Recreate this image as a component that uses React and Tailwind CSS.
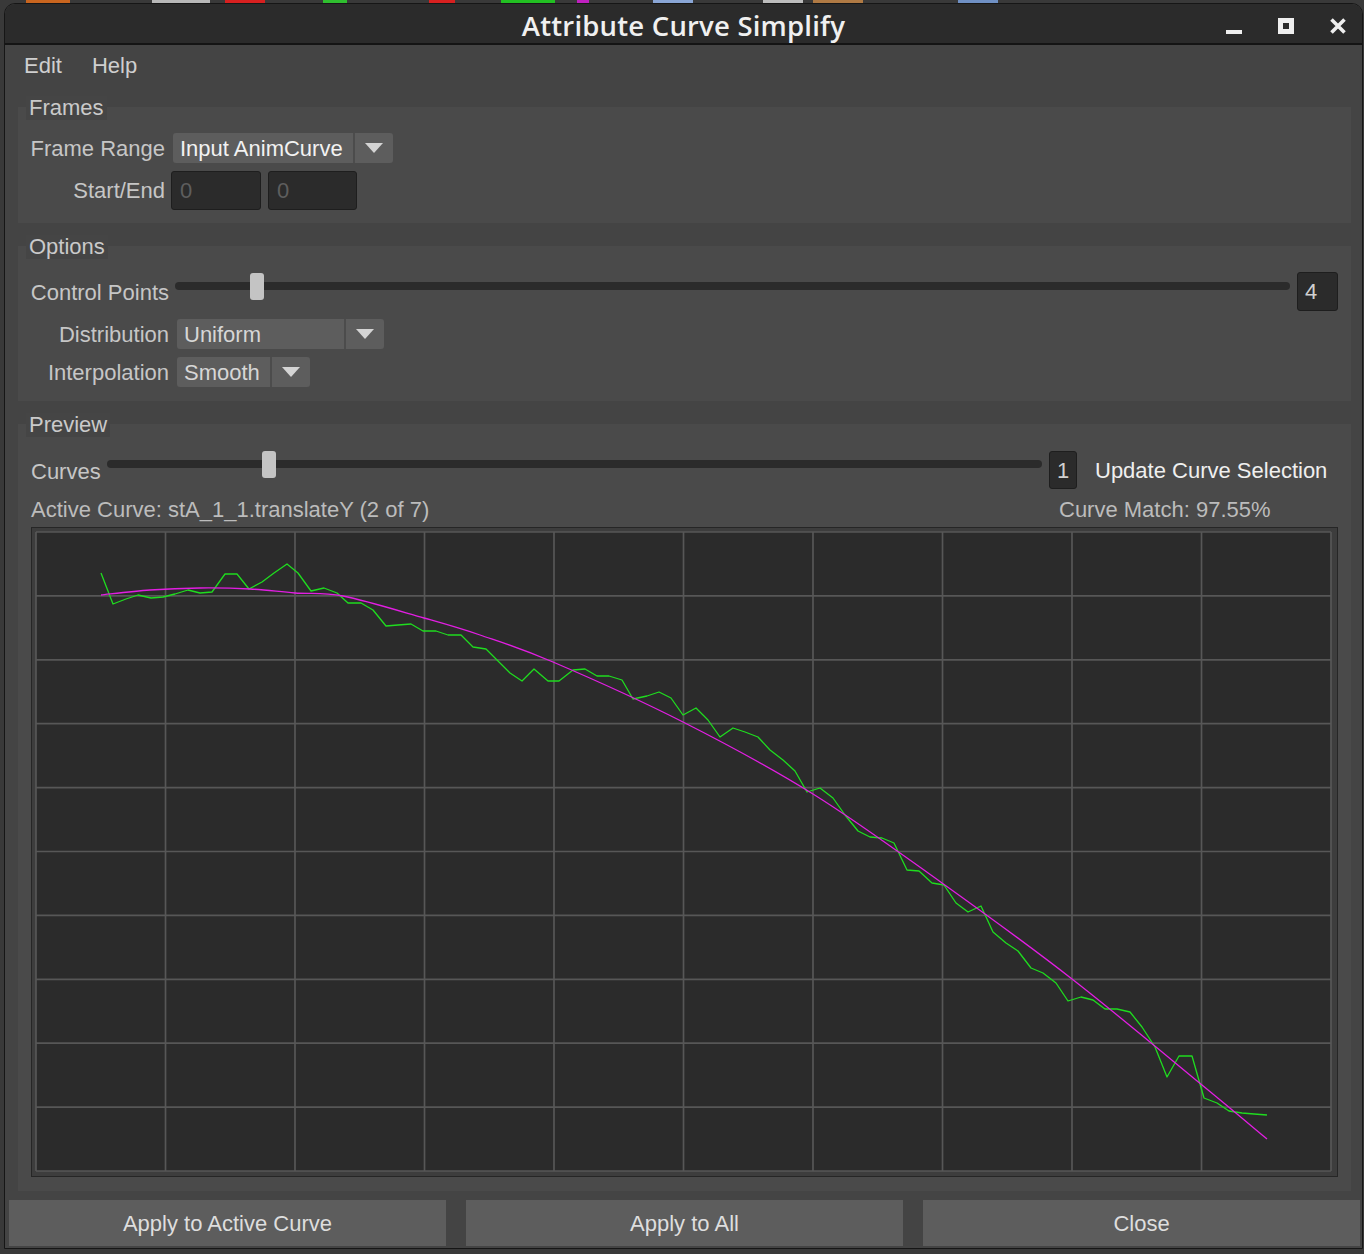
const GREEN =
  '101,573 113,604 126,599 138,595 151,598 163,597 175,594 188,590 200,593 212,592 225,574 237,574 249,589 262,582 274,573 287,564 298,573 311,591 324,588 337,593 348,603 361,603 373,610 386,626 398,625 411,624 423,631 436,631 448,635 461,635 473,647 486,649 497,660 510,673 522,681 534,669 548,681 559,681 573,670 585,669 597,676 609,676 622,680 633,699 647,696 659,692 671,698 683,715 696,708 708,720 720,737 733,728 745,732 758,737 770,750 783,760 795,771 807,792 820,788 833,798 845,815 858,831 870,837 882,838 894,843 907,870 919,871 932,883 944,885 956,903 968,912 981,906 993,932 1006,943 1018,951 1031,968 1043,973 1056,983 1068,1001 1081,997 1093,1000 1105,1009 1117,1009 1130,1012 1142,1027 1155,1047 1167,1077 1179,1056 1192,1056 1204,1098 1217,1103 1229,1111 1242,1113 1254,1114 1267,1115';

const MAGENTA = [
  [101, 595], [150, 590], [200, 588], [250, 589], [295, 593], [343, 596], [424, 618],
  [480, 635], [553, 662], [683, 722], [813, 794], [942, 883], [1072, 979], [1202, 1085], [1267, 1139],
];

// catmull-rom -> cubic bezier
function smooth(pts) {
  let d = `M${pts[0][0]},${pts[0][1]}`;
  for (let i = 0; i < pts.length - 1; i++) {
    const p0 = pts[i - 1] || pts[i];
    const p1 = pts[i];
    const p2 = pts[i + 1];
    const p3 = pts[i + 2] || p2;
    const c1x = p1[0] + (p2[0] - p0[0]) / 6;
    const c1y = p1[1] + (p2[1] - p0[1]) / 6;
    const c2x = p2[0] - (p3[0] - p1[0]) / 6;
    const c2y = p2[1] - (p3[1] - p1[1]) / 6;
    d += ` C${c1x},${c1y} ${c2x},${c2y} ${p2[0]},${p2[1]}`;
  }
  return d;
}

const COLS = Array.from({ length: 11 }, (_, i) => 36 + i * 129.5);
const ROWS = Array.from({ length: 11 }, (_, i) => 532 + i * 63.9);

function Arrow() {
  return (
    <svg width="18" height="10" viewBox="0 0 18 10">
      <polygon points="0,0 18,0 9,10" fill="#d4d4d4" />
    </svg>
  );
}

function Dropdown({ value, w, bright }) {
  return (
    <div className={`flex h-[30px] rounded-[3px] bg-[#5d5d5d] ${w}`}>
      <div className={`flex-1 pl-[7px] flex items-center ${bright ? 'text-[#f2f2f2]' : 'text-[#d6d6d6]'}`}>{value}</div>
      <div className="w-[2px] bg-[#4c4c4c]" />
      <div className="w-[38px] flex items-center justify-center">
        <Arrow />
      </div>
    </div>
  );
}

function Slider({ w, handle }) {
  return (
    <div className={`relative h-[27px] ${w}`}>
      <div className="mt-[9px] h-[8px] rounded-full bg-[#2b2b2b]" />
      <div className="absolute top-0 h-[27px] w-[14px] rounded-[3px] bg-[#c4c4c4]" style={{ left: handle }} />
    </div>
  );
}

function ValueBox({ value, w, h }) {
  return (
    <div className={`${w} ${h} rounded-[3px] border border-[#1e1e1e] bg-[#2b2b2b] pl-[7px] flex items-center text-[#d0d0d0]`}>{value}</div>
  );
}

function Group({ title, className, children }) {
  return (
    <div className={`ml-[13px] mr-[11px] flex flex-col bg-[#4a4a4a] ${className}`}>
      <div className="-mt-[11px] ml-[8px] self-start h-[24px] px-[3px] bg-[#454545] text-[#cacaca] leading-[24px]">{title}</div>
      {children}
    </div>
  );
}

function WinButtons() {
  return (
    <div className="flex items-center gap-[36px] pr-[16px] pt-[2px]">
      <svg width="16" height="17" viewBox="0 0 16 17">
        <rect x="0" y="12" width="16" height="4" fill="#efefef" />
      </svg>
      <svg width="16" height="17" viewBox="0 0 16 17">
        <path d="M0 0H16V16H0Z M5 5V11H11V5Z" fill="#efefef" fillRule="evenodd" />
      </svg>
      <svg width="16" height="17" viewBox="0 0 16 17">
        <path d="M1.5 1.5L14.5 14.5M14.5 1.5L1.5 14.5" stroke="#efefef" strokeWidth="3.6" />
      </svg>
    </div>
  );
}

function Graph() {
  return (
    <div className="ml-[13px] mt-[5px] w-[1307px] h-[650px] border border-[#262626] bg-[#3d3d3d] p-[3px]">
      <svg width="1299" height="642" viewBox="35 531 1299 642" className="block">
        <rect x="36" y="532" width="1295" height="639" fill="#2b2b2b" />
        {COLS.map((x) => (
          <line key={'c' + x} x1={x} y1="532" x2={x} y2="1171" stroke="#575757" strokeWidth="1.7" />
        ))}
        {ROWS.map((y) => (
          <line key={'r' + y} x1="36" y1={y} x2="1331" y2={y} stroke="#575757" strokeWidth="1.7" />
        ))}
        <polyline points={GREEN} fill="none" stroke="#1fdc1f" strokeWidth="1.3" strokeLinejoin="round" />
        <path d={smooth(MAGENTA)} fill="none" stroke="#e21ee2" strokeWidth="1.3" />
      </svg>
    </div>
  );
}

export default function App() {
  return (
    <div className="w-[1364px] h-[1254px] overflow-hidden bg-[#393939] font-['Liberation_Sans',Arial,sans-serif] text-[22px]">
      <div className="flex h-[3px]">
        <span className="ml-[26px] w-[44px] bg-[#c9651f]" />
        <span className="ml-[82px] w-[58px] bg-[#b8b8b8]" />
        <span className="ml-[15px] w-[40px] bg-[#d82020]" />
        <span className="ml-[58px] w-[24px] bg-[#2fbf2f]" />
        <span className="ml-[82px] w-[26px] bg-[#d82020]" />
        <span className="ml-[46px] w-[54px] bg-[#22c022]" />
        <span className="ml-[22px] w-[12px] bg-[#c020c0]" />
        <span className="ml-[64px] w-[40px] bg-[#8aa6d6]" />
        <span className="ml-[70px] w-[40px] bg-[#bdbdbd]" />
        <span className="ml-[10px] w-[50px] bg-[#b07a44]" />
        <span className="ml-[95px] w-[40px] bg-[#6f90c4]" />
      </div>
      <div className="ml-[4px] w-[1359px] rounded-t-[11px] border border-[#161616] bg-[#444444] flex flex-col overflow-hidden">
        <div className="h-[39px] bg-[#2b2b2b] border-b-2 border-[#141414] grid grid-cols-[1fr_auto_1fr] items-center box-content">
          <div />
          <div className="pt-[1px] font-['Open_Sans',sans-serif] font-semibold text-[27.5px] text-[#f0f0f0] tracking-[0.2px]">Attribute Curve Simplify</div>
          <div className="flex justify-end">
            <WinButtons />
          </div>
        </div>

        <div className="h-[40px] flex items-center gap-[30px] pl-[19px] text-[#cfcfcf]">
          <span>Edit</span>
          <span>Help</span>
        </div>

        <Group title="Frames" className="mt-[22px] h-[116px]">
          <div className="mt-[13px] flex items-center h-[30px]">
            <div className="w-[147px] text-right text-[#c6c6c6]">Frame Range</div>
            <div className="ml-[8px]">
              <Dropdown value="Input AnimCurve" w="w-[220px]" bright />
            </div>
          </div>
          <div className="mt-[8px] flex items-center h-[39px]">
            <div className="w-[147px] text-right text-[#c6c6c6]">Start/End</div>
            <div className="ml-[6px] w-[90px] h-[39px] rounded-[3px] border border-[#1e1e1e] bg-[#2b2b2b] pl-[8px] flex items-center text-[#5e5e5e]">0</div>
            <div className="ml-[7px] w-[89px] h-[39px] rounded-[3px] border border-[#1e1e1e] bg-[#2b2b2b] pl-[8px] flex items-center text-[#5e5e5e]">0</div>
          </div>
        </Group>

        <Group title="Options" className="mt-[23px] h-[155px]">
          <div className="mt-[13px] flex items-center h-[39px]">
            <div className="w-[151px] text-right text-[#c6c6c6] pt-[2px]">Control Points</div>
            <div className="ml-[6px] flex self-start mt-[1px]">
              <Slider w="w-[1115px]" handle={75} />
            </div>
            <div className="ml-[7px]">
              <ValueBox value="4" w="w-[41px]" h="h-[39px]" />
            </div>
          </div>
          <div className="mt-[8px] flex items-center h-[30px]">
            <div className="w-[151px] text-right text-[#c6c6c6]">Distribution</div>
            <div className="ml-[8px]">
              <Dropdown value="Uniform" w="w-[207px]" />
            </div>
          </div>
          <div className="mt-[8px] flex items-center h-[30px]">
            <div className="w-[151px] text-right text-[#c6c6c6]">Interpolation</div>
            <div className="ml-[8px]">
              <Dropdown value="Smooth" w="w-[133px]" />
            </div>
          </div>
        </Group>

        <Group title="Preview" className="mt-[23px] h-[767px]">
          <div className="mt-[14px] flex items-center h-[38px]">
            <div className="w-[89px] pl-[13px] text-[#c6c6c6] pt-[2px]">Curves</div>
            <div className="flex self-start">
              <Slider w="w-[935px]" handle={155} />
            </div>
            <div className="ml-[7px]">
              <ValueBox value="1" w="w-[28px]" h="h-[38px]" />
            </div>
            <div className="ml-[18px] text-[#efefef]">Update Curve Selection</div>
          </div>
          <div className="mt-[7px] flex h-[26px] items-center pl-[13px] text-[#bcbcbc]">
            <div className="w-[1028px]">Active Curve: stA_1_1.translateY (2 of 7)</div>
            <div>Curve Match: 97.55%</div>
          </div>
          <Graph />
        </Group>

        <div className="mt-[9px] ml-[4px] flex gap-[20px]">
          <div className="w-[437px] h-[46px] bg-[#5d5d5d] flex items-center justify-center text-[#dedede]">Apply to Active Curve</div>
          <div className="w-[437px] h-[46px] bg-[#5d5d5d] flex items-center justify-center text-[#dedede]">Apply to All</div>
          <div className="w-[437px] h-[46px] bg-[#5d5d5d] flex items-center justify-center text-[#dedede]">Close</div>
        </div>
        <div className="h-[2px]" />
      </div>
    </div>
  );
}
